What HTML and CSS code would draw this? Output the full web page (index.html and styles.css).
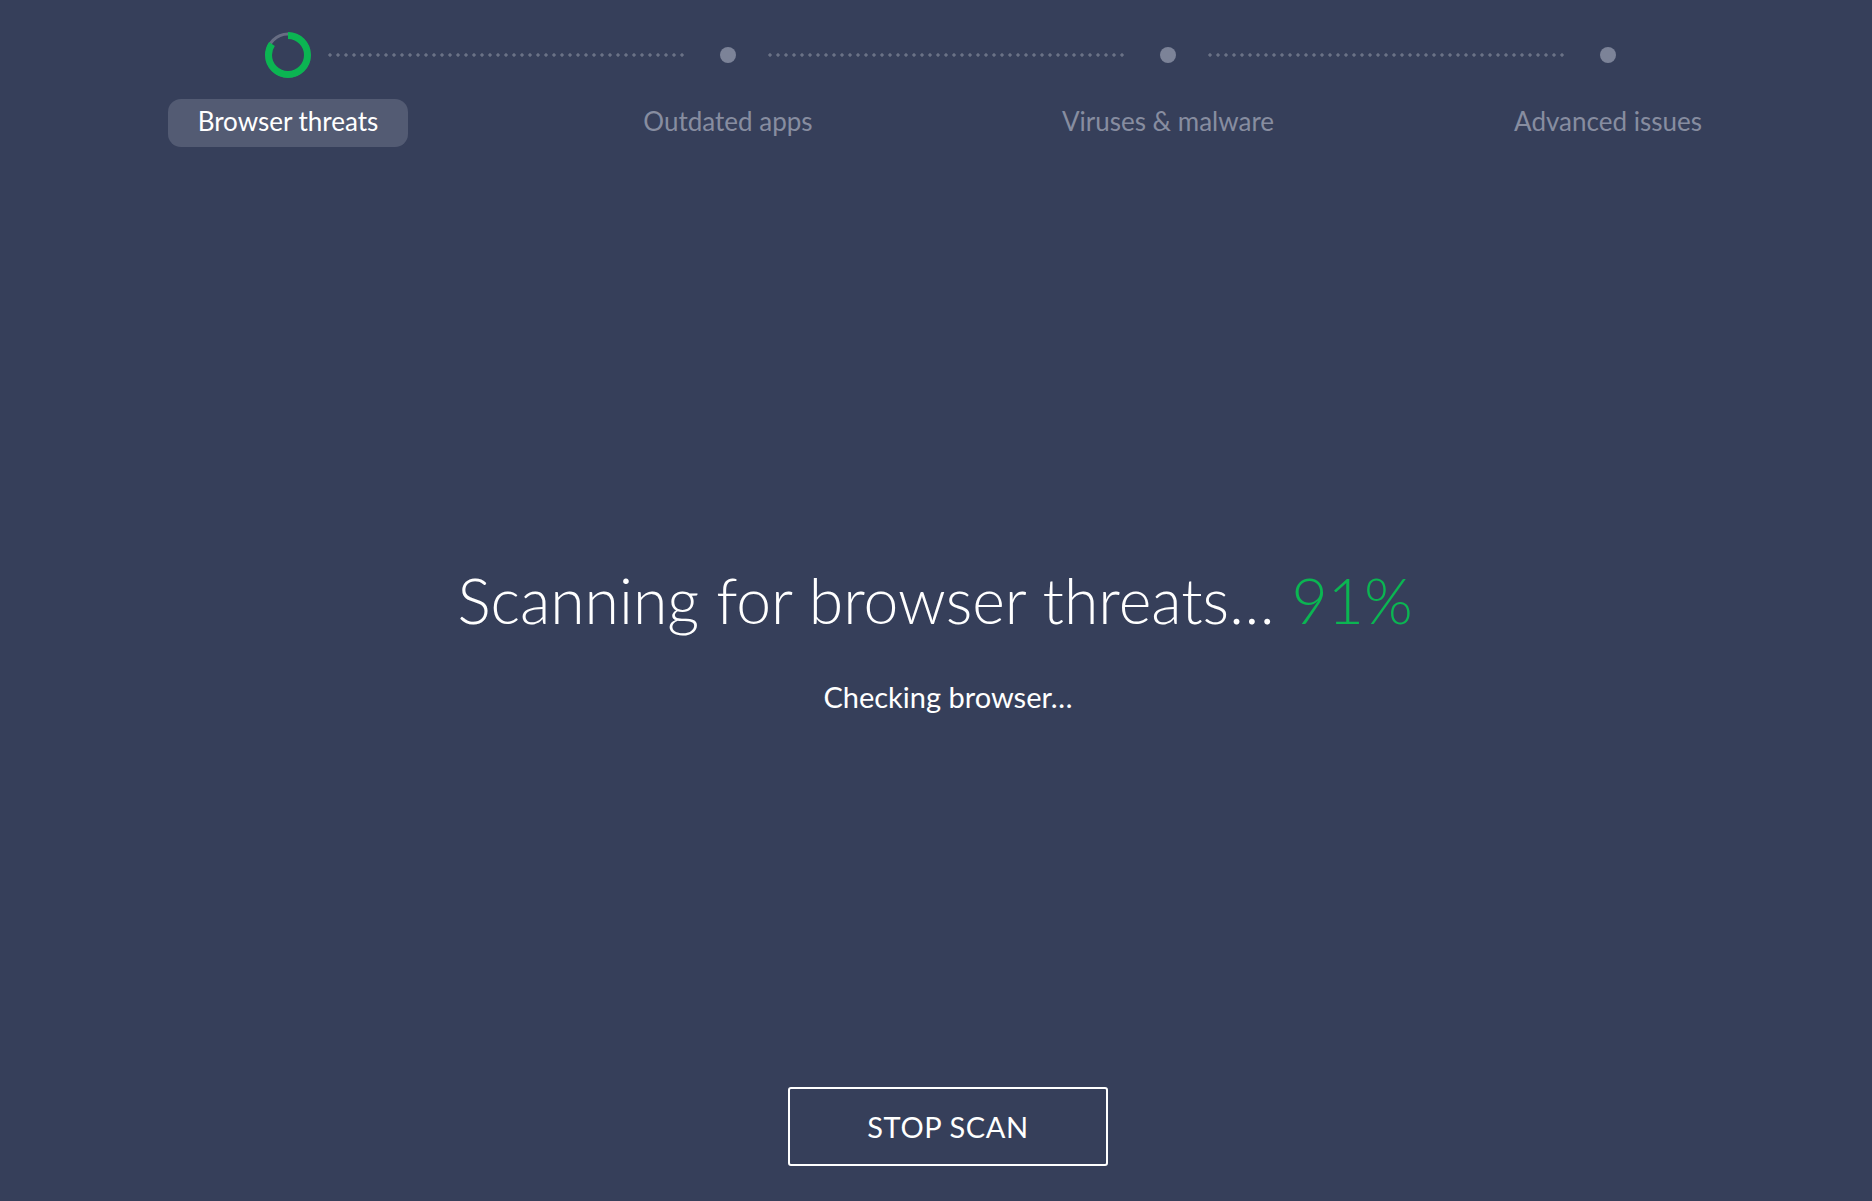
FILE: index.html
```html
<!DOCTYPE html>
<html lang="en">
<head>
<meta charset="utf-8">
<title>Scan</title>
<link rel="stylesheet" href="styles.css">
</head>
<body>
<div class="app">
  <div class="track">
    <div class="indicator">
      <svg class="spinner" width="46" height="46" viewBox="0 0 46 46">
        <circle cx="23" cy="23" r="21" fill="none" stroke="#676d83" stroke-width="3"/>
        <circle cx="23" cy="23" r="19.5" fill="none" stroke="#0bb552" stroke-width="7" stroke-dasharray="103 200" transform="rotate(-90 23 23)"/>
      </svg>
    </div>
    <div class="connector"></div>
    <div class="indicator"><span class="dot"></span></div>
    <div class="connector"></div>
    <div class="indicator"><span class="dot"></span></div>
    <div class="connector"></div>
    <div class="indicator"><span class="dot"></span></div>
  </div>
  <div class="labels">
    <div class="label"><span class="pill">Browser threats</span></div>
    <div class="label">Outdated apps</div>
    <div class="label">Viruses &amp; malware</div>
    <div class="label">Advanced issues</div>
  </div>
  <h1 class="title">Scanning for browser threats… <span class="pct">91%</span></h1>
  <p class="sub">Checking browser…</p>
  <div class="actions"><button class="stop">STOP SCAN</button></div>
</div>
</body>
</html>
```
FILE: styles.css
```css
html, body {
  margin: 0;
  padding: 0;
  background: #363f5a;
  height: 100%;
}
body {
  font-family: Lato, "Open Sans", Arial, sans-serif;
  color: #ffffff;
}
.app {
  height: 1201px;
  box-sizing: border-box;
  padding: 32px 44px 0 68px;
  display: flex;
  flex-direction: column;
}
.track {
  display: flex;
  align-items: center;
  margin-left: 180px;
  height: 46px;
}
.indicator {
  width: 80px;
  height: 46px;
  display: flex;
  align-items: center;
  justify-content: center;
  flex: none;
}
.spinner { display: block; }
.dot {
  width: 16px;
  height: 16px;
  border-radius: 50%;
  background: #7c8398;
}
.connector {
  width: 360px;
  height: 4px;
  flex: none;
  background-image: radial-gradient(circle, #6a7186 1.4px, transparent 1.9px);
  background-size: 8px 4px;
  background-position: -2px 0;
}
.labels {
  display: grid;
  grid-template-columns: repeat(4, 440px);
  margin-top: 21px;
  height: 48px;
}
.label {
  display: flex;
  align-items: center;
  justify-content: center;
  font-size: 26px;
  color: #878da0;
  height: 48px;
  box-sizing: border-box;
  padding-bottom: 5px;
}
.pill {
  width: 240px;
  height: 48px;
  box-sizing: border-box;
  padding-bottom: 5px;
  margin-bottom: -5px;
  border-radius: 13px;
  background: #535b73;
  color: #ffffff;
  display: flex;
  align-items: center;
  justify-content: center;
}
.title {
  margin: 417px 0 0;
  padding-right: 26px;
  text-align: center;
  font-weight: 300;
  font-size: 62.5px;
  line-height: 72px;
  color: #ffffff;
}
.pct { color: #0bb552; }
.sub {
  margin: 45px 0 0;
  text-align: center;
  font-size: 29px;
  line-height: 31px;
  color: #ffffff;
}
.actions {
  margin-top: 375px;
  display: flex;
  justify-content: center;
}
.stop {
  width: 320px;
  height: 79px;
  border: 2px solid #ffffff;
  border-radius: 3px;
  background: transparent;
  color: #ffffff;
  font-family: Lato, "Open Sans", Arial, sans-serif;
  font-size: 29px;
  letter-spacing: 0.6px;
  cursor: pointer;
}
```
